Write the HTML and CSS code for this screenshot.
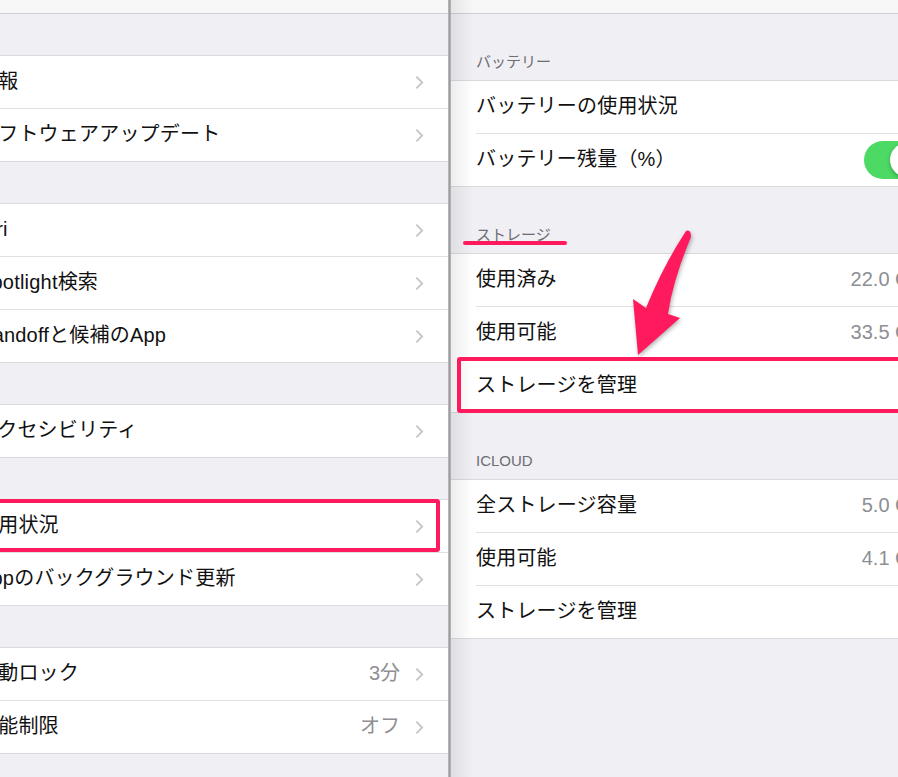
FILE: index.html
```html
<!DOCTYPE html>
<html lang="ja">
<head>
  <meta charset="UTF-8">
  <title>一般 / 使用状況</title>
  <meta name="viewport" content="width=device-width, initial-scale=1.0">
  <link rel="stylesheet" href="styles.css">
</head>
<body>
  <div class="split">
    <!-- left: settings menu (cropped) -->
    <section class="pane left">
      <div class="bar"></div>
      <div class="gap"></div>
      <div class="group">
        <div class="row"><div class="cell"><span class="label">情報</span><svg class="chev" viewBox="0 0 10 16"><polyline points="1.5,1.5 8,8 1.5,14.5"/></svg></div></div>
        <div class="row"><div class="cell"><span class="label">ソフトウェアアップデート</span><svg class="chev" viewBox="0 0 10 16"><polyline points="1.5,1.5 8,8 1.5,14.5"/></svg></div></div>
      </div>
      <div class="gap"></div>
      <div class="group">
        <div class="row"><div class="cell"><span class="label">Siri</span><svg class="chev" viewBox="0 0 10 16"><polyline points="1.5,1.5 8,8 1.5,14.5"/></svg></div></div>
        <div class="row"><div class="cell"><span class="label">Spotlight検索</span><svg class="chev" viewBox="0 0 10 16"><polyline points="1.5,1.5 8,8 1.5,14.5"/></svg></div></div>
        <div class="row"><div class="cell"><span class="label">Handoffと候補のApp</span><svg class="chev" viewBox="0 0 10 16"><polyline points="1.5,1.5 8,8 1.5,14.5"/></svg></div></div>
      </div>
      <div class="gap"></div>
      <div class="group">
        <div class="row"><div class="cell"><span class="label">アクセシビリティ</span><svg class="chev" viewBox="0 0 10 16"><polyline points="1.5,1.5 8,8 1.5,14.5"/></svg></div></div>
      </div>
      <div class="gap"></div>
      <div class="group">
        <div class="row"><div class="cell"><span class="label">使用状況</span><svg class="chev" viewBox="0 0 10 16"><polyline points="1.5,1.5 8,8 1.5,14.5"/></svg></div></div>
        <div class="row"><div class="cell"><span class="label">Appのバックグラウンド更新</span><svg class="chev" viewBox="0 0 10 16"><polyline points="1.5,1.5 8,8 1.5,14.5"/></svg></div></div>
      </div>
      <div class="gap"></div>
      <div class="group">
        <div class="row"><div class="cell"><span class="label">自動ロック</span><span class="value">3分</span><svg class="chev" viewBox="0 0 10 16"><polyline points="1.5,1.5 8,8 1.5,14.5"/></svg></div></div>
        <div class="row"><div class="cell"><span class="label">機能制限</span><span class="value">オフ</span><svg class="chev" viewBox="0 0 10 16"><polyline points="1.5,1.5 8,8 1.5,14.5"/></svg></div></div>
      </div>
    </section>

    <div class="divider"></div>

    <!-- right: usage detail -->
    <section class="pane right">
      <div class="bar"></div>
      <div class="header">バッテリー</div>
      <div class="group">
        <div class="row"><div class="cell"><span class="label">バッテリーの使用状況</span></div></div>
        <div class="row"><div class="cell"><span class="label">バッテリー残量（%）</span><span class="switch on"></span></div></div>
      </div>
      <div class="header">ストレージ</div>
      <div class="group">
        <div class="row"><div class="cell"><span class="label">使用済み</span><span class="value">22.0 GB</span></div></div>
        <div class="row"><div class="cell"><span class="label">使用可能</span><span class="value">33.5 GB</span></div></div>
        <div class="row"><div class="cell"><span class="label">ストレージを管理</span></div></div>
      </div>
      <div class="header">ICLOUD</div>
      <div class="group">
        <div class="row"><div class="cell"><span class="label">全ストレージ容量</span><span class="value">5.0 GB</span></div></div>
        <div class="row"><div class="cell"><span class="label">使用可能</span><span class="value">4.1 GB</span></div></div>
        <div class="row"><div class="cell"><span class="label">ストレージを管理</span></div></div>
      </div>
    </section>

    <!-- annotations drawn over the screenshot -->
    <div class="mark box-usage"></div>
    <div class="mark box-manage"></div>
    <div class="mark underline"></div>
    <svg class="arrow" viewBox="625 225 75 140">
      <path d="M686,231 Q691,229 691,237 Q673,280 668,314 L680,318 L638,355 L633,299 L646,308 Q663,266 686,231 Z"/>
    </svg>
  </div>
</body>
</html>
```

FILE: styles.css
```css
body { margin: 0; overflow: hidden; font-family: "Liberation Sans", "Noto Sans CJK JP", sans-serif; color: #111; }
.split { display: flex; width: 898px; height: 777px; overflow: hidden; position: relative; }

.pane { flex: none; background: #efeff4; overflow: hidden; position: relative; }
.left { width: 448px; }
.right { width: 490px; }
.right::before { content: ""; position: absolute; left: 0; top: 0; bottom: 0; width: 22px; background: linear-gradient(to right, rgba(0,0,0,0.07), rgba(0,0,0,0)); z-index: 2; }
.divider { flex: none; width: 3px; background: linear-gradient(to right, #c2c2c6, #9c9ca0, #bdbdc1); }

.bar { height: 13px; background: #f7f7f7; border-bottom: 1px solid #cfcfd3; }
.gap { height: 41px; }
.header { height: 66px; box-sizing: border-box; display: flex; align-items: flex-end; padding: 0 0 9px 25px; font-size: 15px; line-height: 18px; color: #6d6d72; }

.group { background: #fff; border-top: 1px solid #d9d9de; border-bottom: 1px solid #d9d9de; }
.left .group { margin-left: -42px; }
.row { padding-left: 25px; }
.left .row { padding-left: 20px; }
.cell { height: 52px; display: flex; align-items: center; padding-right: 17px; }
.left .cell { padding-right: 24px; }
.row + .row .cell { border-top: 1px solid #e1e1e5; }

.label { flex: 1; font-size: 20px; line-height: 24px; padding-bottom: 2px; letter-spacing: 0.2px; white-space: nowrap; }
.value { font-size: 20px; line-height: 24px; padding-bottom: 2px; color: #8e8e93; white-space: nowrap; }
.left .value { margin-right: 15px; }
.chev { width: 9px; height: 15px; fill: none; stroke: #c4c4c9; stroke-width: 2; }

.switch { width: 62px; height: 38px; border-radius: 19px; background: #4cd964; position: relative; margin-right: -2px; }
.switch.on::after { content: ""; position: absolute; right: 2px; top: 2px; width: 34px; height: 34px; border-radius: 50%; background: #fff; box-shadow: 0 2px 4px rgba(0,0,0,0.25); }

.mark { position: absolute; z-index: 5; }
.box-usage { left: -10px; top: 499px; width: 450px; height: 53px; box-sizing: border-box; border: 4px solid #ff1a5e; border-radius: 3px; }
.box-manage { left: 457px; top: 357px; width: 470px; height: 56px; box-sizing: border-box; border: 4px solid #ff1a5e; border-radius: 3px; }
.underline { left: 463px; top: 241px; width: 104px; height: 4px; border-radius: 2px; background: #ff1a5e; }
.arrow { position: absolute; left: 625px; top: 225px; width: 75px; height: 140px; z-index: 6; fill: #ff1a5e; filter: drop-shadow(1px 2px 2px rgba(0,0,0,0.3)); }
```
